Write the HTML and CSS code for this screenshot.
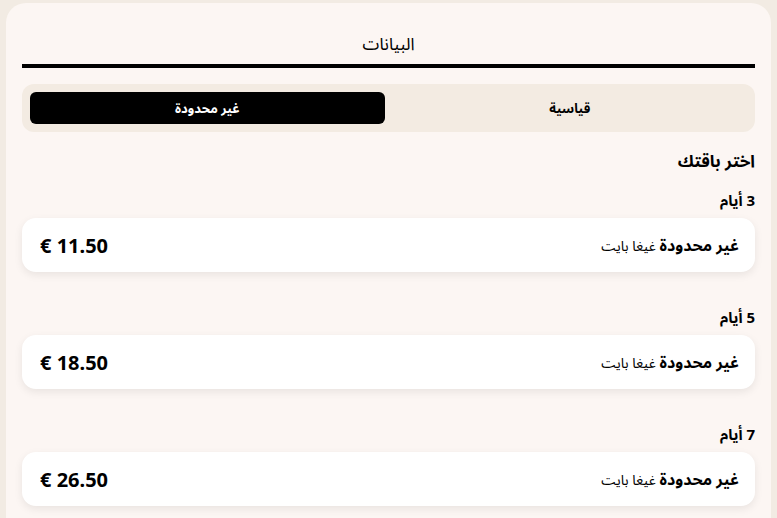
FILE: index.html
```html
<!DOCTYPE html>
<html lang="ar" dir="rtl">
<head>
<meta charset="utf-8">
<title>البيانات</title>
<link rel="stylesheet" href="styles.css">
</head>
<body>
<main class="sheet">
  <h1 class="title">البيانات</h1>
  <div class="segment">
    <button class="seg-btn">قياسية</button>
    <button class="seg-btn active">غير محدودة</button>
  </div>
  <h2 class="choose">اختر باقتك</h2>

  <section class="group">
    <h3 class="days">3 أيام</h3>
    <div class="plan">
      <span class="plan-name"><b>غير محدودة</b> غيغا بايت</span>
      <span class="price">€ 11.50</span>
    </div>
  </section>

  <section class="group">
    <h3 class="days">5 أيام</h3>
    <div class="plan">
      <span class="plan-name"><b>غير محدودة</b> غيغا بايت</span>
      <span class="price">€ 18.50</span>
    </div>
  </section>

  <section class="group">
    <h3 class="days">7 أيام</h3>
    <div class="plan">
      <span class="plan-name"><b>غير محدودة</b> غيغا بايت</span>
      <span class="price">€ 26.50</span>
    </div>
  </section>
</main>
</body>
</html>
```

FILE: styles.css
```css
* { box-sizing: border-box; }
html, body { margin: 0; padding: 0; }
body {
  background: #f2ebe3;
  font-family: "Noto Sans", "Noto Sans Arabic UI", "Noto Sans Arabic", "Noto Kufi Arabic", "DejaVu Sans", sans-serif;
  color: #000;
}
.sheet {
  margin: 3px 6px 0 6px;
  background: #fcf6f3;
  border-radius: 20px 20px 0 0;
  padding: 28px 16px 8px 16px;
  min-height: calc(100vh - 3px);
}
.title {
  margin: 0;
  font-size: 17px;
  font-weight: 400;
  line-height: 26px;
  text-align: center;
  padding-bottom: 7px;
  border-bottom: 4px solid #000;
}
.segment {
  margin-top: 16px;
  background: #f3ebe2;
  border-radius: 12px;
  padding: 8px;
  display: grid;
  grid-template-columns: 1fr 1fr;
  gap: 8px;
}
.seg-btn {
  font-family: inherit;
  font-size: 13px;
  font-weight: 700;
  height: 32px;
  border: 0;
  border-radius: 6px;
  background: transparent;
  color: #000;
  padding: 0;
}
.seg-btn.active {
  background: #000;
  color: #fff;
}
.choose {
  margin: 17px 0 0 0;
  font-size: 17px;
  font-weight: 700;
  line-height: 24px;
}
.group { margin-top: 16px; }
.group + .group { margin-top: 34px; }
.days {
  margin: 0 0 7px 0;
  font-size: 15px;
  font-weight: 700;
  line-height: 22px;
}
.plan {
  height: 54px;
  background: #fff;
  border-radius: 14px;
  box-shadow: 0 3px 8px rgba(0, 0, 0, 0.08);
  display: flex;
  align-items: center;
  justify-content: space-between;
  padding: 0 16px 0 18px;
}
.plan-name {
  font-size: 14px;
}
.plan-name b {
  font-size: 16px;
  font-weight: 700;
}
.price {
  font-size: 20px;
  font-weight: 700;
  direction: ltr;
}
```
